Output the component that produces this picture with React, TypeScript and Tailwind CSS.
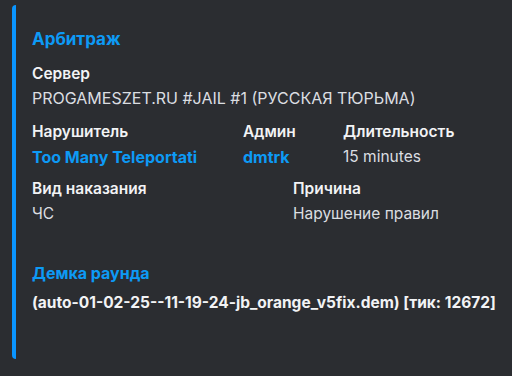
export default function App() {
  return (
    <div
      className="w-[512px] h-[376px] bg-[#2b2d31] pt-[5px] pl-[12px] overflow-hidden"
      style={{ fontFamily: 'Inter, "Noto Sans", sans-serif' }}
    >
      <div className="flex h-[354px]">
        {/* accent bar */}
        <div className="w-[4px] shrink-0 rounded-l-[4px] bg-[#0a95ff]" />

        <div className="flex-1 pl-[16px] pt-[22px]">
          <h2 className="text-[17px] leading-[24px] font-bold text-[#0d9af5]">Арбитраж</h2>

          {/* Server */}
          <div className="mt-[13px]">
            <div className="text-[15.5px] leading-[20px] font-semibold text-[#f2f3f5]">Сервер</div>
            <div className="mt-[4px] text-[16px] leading-[20px] text-[#dbdee1]">
              PROGAMESZET.RU #JAIL #1 (РУССКАЯ ТЮРЬМА)
            </div>
          </div>

          {/* Row 1 */}
          <div className="mt-[14px] grid grid-cols-[211px_100px_1fr]">
            <div>
              <div className="text-[15.5px] leading-[20px] font-semibold text-[#f2f3f5]">Нарушитель</div>
              <div className="mt-[5px] text-[16px] leading-[20px] font-bold text-[#0d9af5]">Too Many Teleportati</div>
            </div>
            <div>
              <div className="text-[15.5px] leading-[20px] font-semibold text-[#f2f3f5]">Админ</div>
              <div className="mt-[5px] text-[16px] leading-[20px] font-bold text-[#0d9af5]">dmtrk</div>
            </div>
            <div>
              <div className="text-[15.5px] leading-[20px] font-semibold text-[#f2f3f5]">Длительность</div>
              <div className="mt-[5px] text-[15.5px] leading-[20px] text-[#dbdee1]">15 minutes</div>
            </div>
          </div>

          {/* Row 2 */}
          <div className="mt-[12px] grid grid-cols-[261px_1fr]">
            <div>
              <div className="text-[15.5px] leading-[20px] font-semibold text-[#f2f3f5]">Вид наказания</div>
              <div className="mt-[5px] text-[15.5px] leading-[20px] text-[#dbdee1]">ЧС</div>
            </div>
            <div>
              <div className="text-[15.5px] leading-[20px] font-semibold text-[#f2f3f5]">Причина</div>
              <div className="mt-[5px] text-[15.5px] leading-[20px] text-[#dbdee1]">Нарушение правил</div>
            </div>
          </div>

          {/* Demo */}
          <div className="mt-[39px]">
            <div className="text-[16px] leading-[20px] font-bold text-[#0d9af5]">Демка раунда</div>
            <div className="mt-[10px] text-[15.5px] leading-[20px] font-bold text-[#f2f3f5] whitespace-nowrap">
              (auto-01-02-25--11-19-24-jb_orange_v5fix.dem) [тик: 12672]
            </div>
          </div>
        </div>
      </div>
    </div>
  );
}
